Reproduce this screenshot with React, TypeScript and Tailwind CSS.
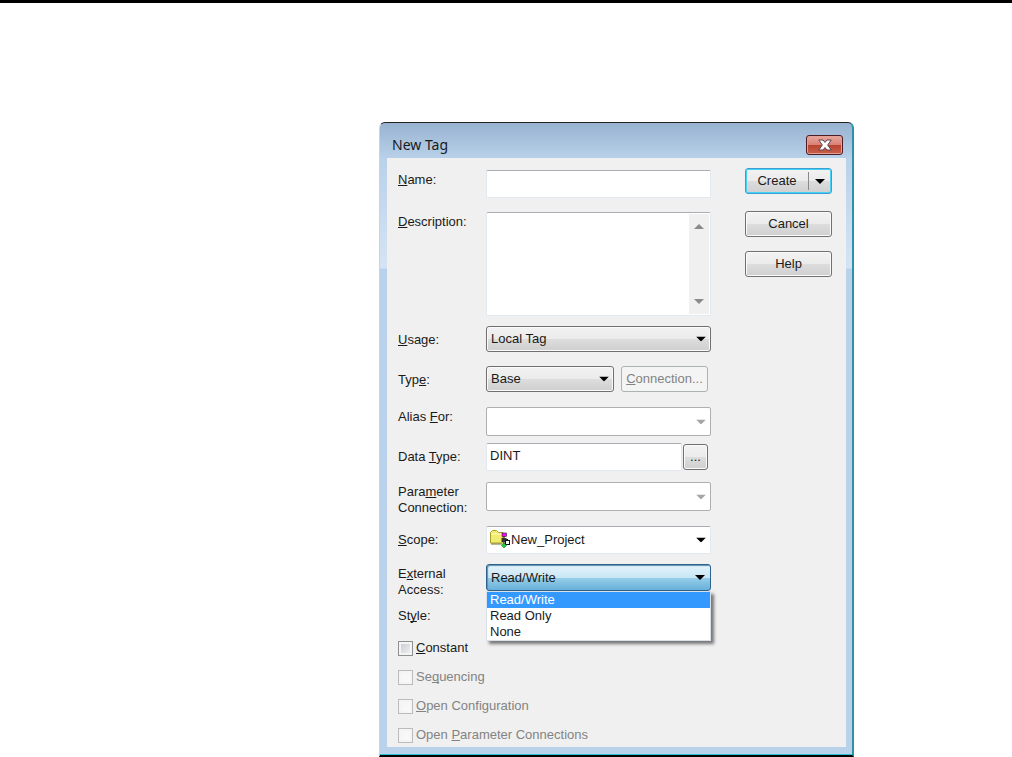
import { useState } from 'react';
import type { ReactNode } from 'react';

const ACCESS_OPTIONS = ['Read/Write', 'Read Only', 'None'];

const BUTTON =
  'h-[26px] rounded-[3px] border border-[#707070] bg-[linear-gradient(#f2f2f2,#ebebeb_50%,#dddddd_50%,#cfcfcf)] shadow-[inset_0_0_0_1px_#fafafa]';
const FIELD = 'rounded-[2px] border border-[#e2e8f0] border-t-[#abadb3] bg-white';

function Arrow({ className }: { className: string }) {
  return (
    <svg viewBox="0 0 10 5" className={`pointer-events-none h-[5px] w-[10px] ${className}`} aria-hidden="true">
      <path d="M0 0h10L5 5z" fill="currentColor" />
    </svg>
  );
}

function ProjectIcon() {
  return (
    <svg viewBox="0 0 20 20" className="pointer-events-none absolute top-[3px] left-1 h-5 w-5" aria-hidden="true">
      <path d="M.5 14V3.500l2-2h4l2 2h4.500v10.500z" fill="#f0ec70" stroke="#a8a02a" />
      <path d="M1.500 5h10.500" stroke="#fffcc8" />
      <path d="M1 15h11" stroke="#77711c" />
      <path d="M14 6v10M14 10.500h4" fill="none" stroke="#111" />
      <rect x="12" y="4" width="4.500" height="3.500" fill="#f0f" stroke="#222" strokeWidth="0.6" />
      <rect x="11.500" y="9" width="5" height="4" fill="#333" />
      <rect x="15.500" y="11.500" width="4" height="4" fill="#fff" stroke="#111" />
      <path d="M14 14l2.500 2.500L14 19l-2.500-2.500z" fill="#12d238" stroke="#155c20" strokeWidth="0.5" />
    </svg>
  );
}

interface RowProps {
  id: string;
  label: ReactNode;
  className?: string;
  labelClassName?: string;
  children: ReactNode;
}

function Row({ id, label, className = '', labelClassName = 'pt-0.5', children }: RowProps) {
  return (
    <div className={`flex items-start ${className}`}>
      <label htmlFor={id} className={`w-[88px] shrink-0 leading-4 ${labelClassName}`}>
        {label}
      </label>
      <div className="flex min-w-0 flex-1 items-start">{children}</div>
    </div>
  );
}

interface ComboProps {
  id: string;
  value: string;
  className: string;
  arrow?: string;
  disabled?: boolean;
  children?: ReactNode;
}

function Combo({ id, value, className, arrow = 'text-black', disabled, children }: ComboProps) {
  return (
    <div className="relative min-w-0 flex-1">
      <select id={id} disabled={disabled} defaultValue={value} className={`block w-full appearance-none outline-none ${className}`}>
        <option value={value}>{value}</option>
      </select>
      {children}
      <Arrow className={`absolute top-1/2 right-[5px] -translate-y-1/2 ${arrow}`} />
    </div>
  );
}

interface CheckProps {
  id: string;
  label: ReactNode;
  disabled?: boolean;
}

function Check({ id, label, disabled }: CheckProps) {
  return (
    <div className="flex h-4 items-center gap-[3px]">
      <input
        id={id}
        type="checkbox"
        disabled={disabled}
        className="h-[15px] w-[15px] appearance-none border border-[#8e8f8f] bg-linear-to-br from-[#c2c7cf] to-[#f6f6f6] shadow-[inset_0_0_0_2px_#f4f4f4] checked:bg-[#3399ff] disabled:border-[#bcbcbc] disabled:from-[#f5f5f5] disabled:to-[#fafafa]"
      />
      <label htmlFor={id} className={disabled ? 'text-[#838383]' : ''}>
        {label}
      </label>
    </div>
  );
}

function ExternalAccess() {
  const [value, setValue] = useState('Read/Write');

  return (
    <div className="relative min-w-0 flex-1">
      <button
        id="access"
        type="button"
        aria-haspopup="listbox"
        aria-expanded="true"
        className="flex h-[27px] w-full items-center justify-between rounded-[3px] border border-[#2c628b] bg-[linear-gradient(#e5f4fb,#c8e6f5_50%,#98cfea_50%,#68b0d8)] pr-[5px] pl-1 shadow-[inset_1px_1px_1px_#5d8fad]"
      >
        {value}
        <Arrow className="text-black" />
      </button>
      <ul
        role="listbox"
        aria-labelledby="access"
        className="absolute top-full right-0 left-0 z-10 border border-[#d9dfe8] bg-white leading-4 shadow-[3px_3px_3px_#777]"
      >
        {ACCESS_OPTIONS.map((option) => (
          <li
            key={option}
            role="option"
            aria-selected={option === value}
            onClick={() => setValue(option)}
            className="pl-[3px] aria-selected:bg-[#3399ff] aria-selected:text-white"
          >
            {option}
          </li>
        ))}
      </ul>
    </div>
  );
}

export default function App() {
  return (
    <div className="min-h-screen bg-white font-['Liberation_Sans',sans-serif] text-[13px] leading-4 text-[#1a1a1a] [text-decoration-skip-ink:none]">
      <div className="h-[3px] bg-black" />
      <main className="grid grid-cols-[379fr_475fr_158fr] pt-[119px]">
        <section
          role="dialog"
          aria-labelledby="dialog-title"
          className="col-start-2 rounded-t-[6px] border-t border-r-2 border-b-2 border-l border-t-[#222] border-r-[#2a93a8] border-b-black border-l-[#cfd3d8] bg-[linear-gradient(#98b3d1,#b9d1ea_36px,#d5e4f4_145px,#b9d1ea_146px)] pr-1.5 pl-[7px]"
        >
          <header className="flex h-[35px] items-center justify-between pr-[3px] pl-[5px]">
            <h1 id="dialog-title" className="pt-2 font-['Noto_Sans',sans-serif] text-sm">
              New Tag
            </h1>
            <button
              type="button"
              aria-label="Close"
              className="mt-2 flex h-5 w-[37px] items-center justify-center rounded-[3px] border border-[#4c1d22] bg-[linear-gradient(#e9a79e,#d98175_48%,#b8432f_50%,#c8604c)] shadow-[inset_0_0_0_1px_#e3a096]"
            >
              <svg viewBox="0 0 14 12" className="h-3 w-3.5" aria-hidden="true">
                <path
                  d="M.8 1h4.200L7 3.400 9 1h4.200L9.700 6l3.500 5H9L7 8.600 5 11H.8l3.500-5z"
                  fill="#fff"
                  stroke="#5a4450"
                />
              </svg>
            </button>
          </header>

          <form className="flex gap-[34px] bg-[#f0f0f0] pt-[10px] pr-3.5 pb-1 pl-[11px]" onSubmit={(e) => e.preventDefault()}>
            <div className="min-w-0 flex-1 pt-0.5">
              <Row id="name" label={<><u>N</u>ame:</>}>
                <input id="name" type="text" className={`h-7 w-full px-1 outline-none ${FIELD}`} />
              </Row>

              <Row id="description" label={<><u>D</u>escription:</>} className="mt-3.5">
                <div className={`flex h-[104px] w-full ${FIELD}`}>
                  <textarea id="description" className="min-w-0 flex-1 resize-none px-1 outline-none" />
                  <div className="my-px mr-px flex w-5 flex-col items-center justify-between bg-[#f0f0f0] py-2.5">
                    <Arrow className="rotate-180 text-[#8b8b8b]" />
                    <Arrow className="text-[#8b8b8b]" />
                  </div>
                </div>
              </Row>

              <Row id="usage" label={<><u>U</u>sage:</>} className="mt-2.5" labelClassName="pt-1.5">
                <Combo id="usage" value="Local Tag" className={`pl-1 ${BUTTON}`} />
              </Row>

              <Row id="type" label={<>Typ<u>e</u>:</>} className="mt-3.5" labelClassName="pt-1.5">
                <Combo id="type" value="Base" className={`pl-1 ${BUTTON}`} />
                <button
                  type="button"
                  disabled
                  className="mr-[3px] ml-[7px] h-[26px] w-[87px] rounded-[3px] border border-[#adb2b5] bg-[#f4f4f4] text-[#838383]"
                >
                  <u>C</u>onnection...
                </button>
              </Row>

              <Row id="alias" label={<>Alias <u>F</u>or:</>} className="mt-[15px]">
                <Combo id="alias" value="" disabled className="h-[29px] rounded-[2px] border border-[#afafaf] bg-white" arrow="text-[#a5a5a5]" />
              </Row>

              <Row id="data-type" label={<>Data <u>T</u>ype:</>} className="mt-[7px]" labelClassName="pt-1.5">
                <input id="data-type" type="text" defaultValue="DINT" className={`h-7 min-w-0 flex-1 px-[3px] pb-1 outline-none ${FIELD}`} />
                <button type="button" aria-label="Browse data types" className={`mt-px mr-[3px] ml-px w-[25px] ${BUTTON}`}>
                  ...
                </button>
              </Row>

              <Row id="parameter" label={<>Para<u>m</u>eter<br />Connection:</>} className="mt-[11px] h-[29px]">
                <Combo id="parameter" value="" disabled className="h-[29px] rounded-[2px] border border-[#afafaf] bg-white" arrow="text-[#a5a5a5]" />
              </Row>

              <Row id="scope" label={<><u>S</u>cope:</>} className="mt-[15px]" labelClassName="pt-1.5">
                <Combo id="scope" value="New_Project" className={`h-7 pl-6 ${FIELD}`}>
                  <ProjectIcon />
                </Combo>
              </Row>

              <Row id="access" label={<>E<u>x</u>ternal<br />Access:</>} className="mt-2.5">
                <ExternalAccess />
              </Row>

              <p className="mt-2.5">
                St<u>y</u>le:
              </p>

              <div className="mt-4 flex flex-col gap-[13px]">
                <Check id="constant" label={<><u>C</u>onstant</>} />
                <Check id="sequencing" label={<>Se<u>q</u>uencing</>} disabled />
                <Check id="open-config" label={<><u>O</u>pen Configuration</>} disabled />
                <Check id="open-params" label={<>Open <u>P</u>arameter Connections</>} disabled />
              </div>
            </div>

            <div className="flex w-[87px] shrink-0 flex-col">
              <div className="flex h-[26px] rounded-[3px] border border-[#3c9fd1] bg-[linear-gradient(#f2f2f2,#ebebeb_50%,#dddddd_50%,#cfcfcf)] shadow-[inset_0_0_0_1px_#46d2f7]">
                <button type="submit" className="flex-1">
                  Create
                </button>
                <button
                  type="button"
                  aria-label="More create options"
                  className="my-[3px] flex w-[23px] items-center justify-center border-l border-[#8a8a8a]"
                >
                  <Arrow className="text-black" />
                </button>
              </div>
              <button type="button" className={`mt-[17px] ${BUTTON}`}>
                Cancel
              </button>
              <button type="button" className={`mt-3.5 ${BUTTON}`}>
                Help
              </button>
            </div>
          </form>
          <div className="-mr-1.5 -ml-[7px] h-2 border-b border-[#2fc0d3]" />
        </section>
      </main>
    </div>
  );
}
